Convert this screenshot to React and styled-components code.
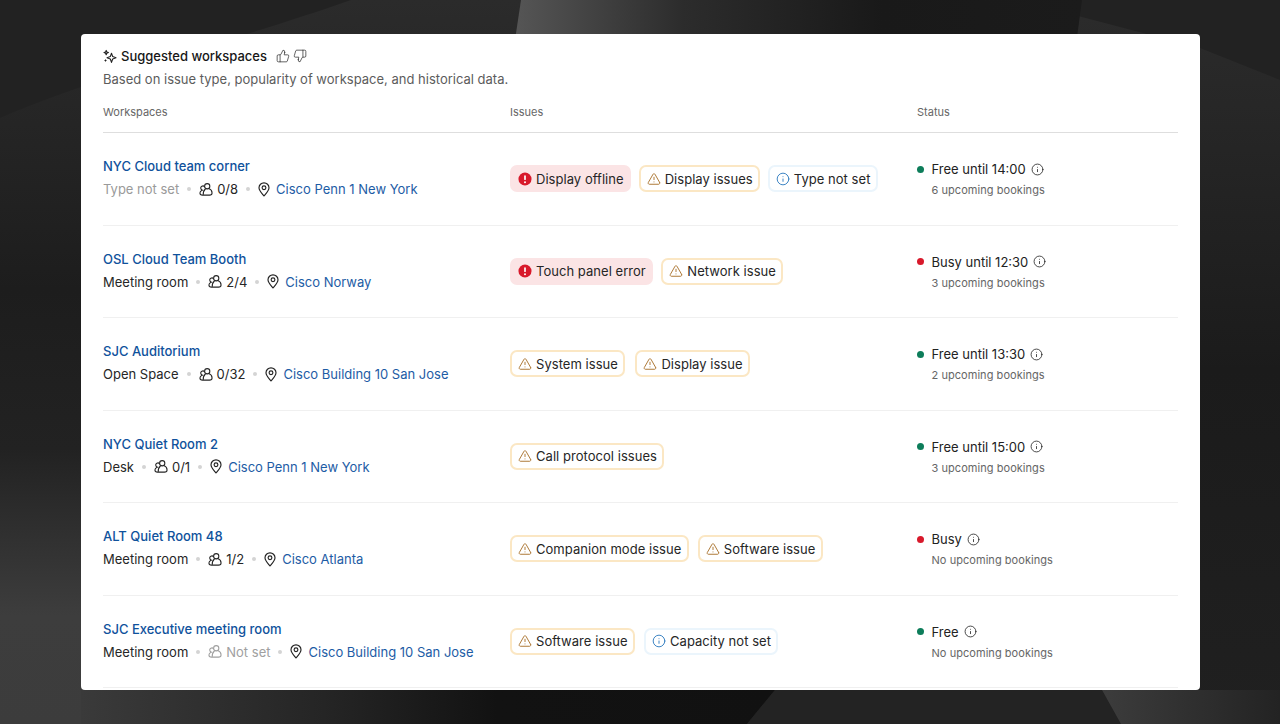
import React from "react";
import styled, { createGlobalStyle } from "styled-components";
import { ThumbsUp, ThumbsDown, TriangleAlert, Info } from "lucide-react";

const Global = createGlobalStyle`
  html, body { margin: 0; padding: 0; background: #1c1c1c; }
  body { font-family: Inter, "Liberation Sans", sans-serif; -webkit-font-smoothing: antialiased; }
  * { box-sizing: border-box; }
`;

const Page = styled.div`
  position: relative;
  width: 1280px;
  height: 724px;
  overflow: hidden;
  padding: 34px 80px 34px 81px;
`;
const Backdrop = styled.svg`
  position: absolute;
  inset: 0;
  width: 1280px;
  height: 724px;
`;
const Card = styled.section`
  position: relative;
  height: 656px;
  background: #fff;
  border-radius: 4px;
  padding: 12px 22px 0;
  overflow: hidden;
`;
const TitleRow = styled.div`
  display: flex;
  align-items: center;
  height: 20px;
  color: #1a1a1a;
`;
const Title = styled.h2`
  margin: 0 9px 0 3px;
  font-size: 13px;
  line-height: 20px;
  font-weight: 500;
  color: #171717;
`;
const ThumbGroup = styled.div`
  display: flex;
  gap: 3px;
  color: #333;
`;
const Subtitle = styled.p`
  margin: 3px 0 0;
  font-size: 13px;
  line-height: 20px;
  color: #5c5c5c;
`;
const Columns = styled.div`
  display: grid;
  grid-template-columns: 407px 407px 1fr;
  margin-top: 15px;
  padding-bottom: 12px;
  border-bottom: 1px solid #dedede;
  font-size: 11px;
  line-height: 16px;
  color: #666;
`;
const Row = styled.div`
  display: grid;
  grid-template-columns: 407px 407px 1fr;
  align-items: center;
  height: 92.5px;
  border-bottom: 1px solid #f0f0f0;
`;
const WorkspaceCell = styled.div`
  display: flex;
  flex-direction: column;
  gap: 3px;
  padding-bottom: 1.6px;
`;
const Name = styled.a`
  font-size: 13px;
  line-height: 20px;
  font-weight: 500;
  color: #0f529c;
`;
const Meta = styled.div`
  display: flex;
  align-items: center;
  gap: 8px;
  font-size: 13px;
  line-height: 20px;
  color: #262626;
`;
const MetaText = styled.span`
  color: ${(p) => (p.$muted ? "#9a9a9a" : "#262626")};
`;
const Dot = styled.i`
  width: 4px;
  height: 4px;
  border-radius: 50%;
  background: #d4d4d4;
  flex: none;
`;
const Capacity = styled.span`
  display: flex;
  align-items: center;
  gap: 4px;
  color: ${(p) => (p.$muted ? "#a0a0a0" : "#262626")};
`;
const Place = styled.span`
  display: flex;
  align-items: center;
  gap: 6px;
  color: #1d5ca5;
`;
const PinWrap = styled.span`
  display: flex;
  color: #222;
`;
const ChipRow = styled.div`
  display: flex;
  align-items: center;
  gap: ${(p) => p.$gap}px;
`;
const tones = {
  error: { bg: "#fbe4e5", border: "#fbe4e5", icon: "#d8192b" },
  warn: { bg: "#fff", border: "#fbe7c4", icon: "#a8702a" },
  info: { bg: "#fff", border: "#ebf5fc", icon: "#2f7cc0" },
};
const Chip = styled.span`
  display: inline-flex;
  align-items: center;
  gap: 4px;
  height: 27px;
  padding: 0 5.5px 0 6px;
  border-radius: 7px;
  border: 2px solid ${(p) => tones[p.$tone].border};
  background: ${(p) => tones[p.$tone].bg};
  font-size: 13px;
  letter-spacing: 0.04px;
  color: #262626;
  white-space: nowrap;
  svg { color: ${(p) => tones[p.$tone].icon}; flex: none; }
`;
const StatusCell = styled.div`
  display: flex;
  flex-direction: column;
  gap: 3px;
`;
const StatusLine = styled.div`
  display: flex;
  align-items: center;
  font-size: 13px;
  line-height: 20px;
  color: #222;
`;
const StatusDot = styled.i`
  width: 7px;
  height: 7px;
  border-radius: 50%;
  margin-right: 7.5px;
  background: ${(p) => (p.$busy ? "#d8192b" : "#0d7d5a")};
`;
const StatusInfo = styled.span`
  display: flex;
  margin-left: 5px;
  color: #222;
`;
const StatusNote = styled.div`
  padding-left: 14.5px;
  font-size: 11px;
  letter-spacing: 0.05px;
  line-height: 16px;
  color: #666;
`;

const Sparkle = () => (
  <svg width="15" height="15" viewBox="0 0 15 15" fill="none" stroke="#222" strokeWidth="1.1" strokeLinejoin="round">
    <path d="M8.5 4.2 9.7 7.6 13 8.8 9.7 10 8.5 13.4 7.3 10 4 8.8 7.3 7.6Z" />
    <path d="M3.2 1.4 3.8 3 5.4 3.6 3.8 4.2 3.2 5.8 2.6 4.2 1 3.6 2.6 3Z" />
    <path d="M2.5 10.5v2M1.5 11.5h2" />
  </svg>
);
const People = () => (
  <svg width="14" height="15" viewBox="0 0 15 15" fill="none" stroke="currentColor" strokeWidth="1.15">
    <circle cx="8.8" cy="4" r="2.8" />
    <path d="M6 4.6A2.3 2.3 0 1 0 4.6 8.2" />
    <path d="M3.2 8.3C1.8 9 1 10 1 11.2 1 12.6 2.2 13.5 3.8 13.5H11.2C12.9 13.5 14 12.6 14 11.2 14 9 12.4 7.3 10.6 6.5" />
    <path d="M4.6 13.2C4.2 10.4 5.3 8.4 7 6.7" />
  </svg>
);
const Pin = () => (
  <svg width="12" height="15" viewBox="0 0 12 15" fill="none" stroke="currentColor" strokeWidth="1.15">
    <path d="M6 14C3.8 11.3 1 8.6 1 5.8A5 5 0 0 1 11 5.8C11 8.6 8.2 11.3 6 14Z" strokeLinejoin="round" />
    <circle cx="6" cy="5.7" r="1.9" />
  </svg>
);
const ErrorIcon = () => (
  <svg width="14" height="14" viewBox="0 0 15 15">
    <circle cx="7.5" cy="7.5" r="7" fill="currentColor" />
    <rect x="6.6" y="3.4" width="1.8" height="5.2" rx=".9" fill="#fff" />
    <circle cx="7.5" cy="10.9" r="1.05" fill="#fff" />
  </svg>
);

const ChipIcon = ({ tone }) => {
  if (tone === "error") return <ErrorIcon />;
  if (tone === "warn") return <TriangleAlert size={14} strokeWidth={1.6} />;
  return <Info size={14} strokeWidth={1.6} />;
};

const rows = [
  { name: "NYC Cloud team corner", type: "Type not set", typeMuted: true, cap: "0/8", place: "Cisco Penn 1 New York", gap: 7.5,
    chips: [["error", "Display offline"], ["warn", "Display issues"], ["info", "Type not set"]], status: "Free until 14:00", note: "6 upcoming bookings" },
  { name: "OSL Cloud Team Booth", type: "Meeting room", cap: "2/4", place: "Cisco Norway", gap: 8,
    chips: [["error", "Touch panel error"], ["warn", "Network issue"]], status: "Busy until 12:30", busy: true, note: "3 upcoming bookings" },
  { name: "SJC Auditorium", type: "Open Space", cap: "0/32", place: "Cisco Building 10 San Jose", gap: 10,
    chips: [["warn", "System issue"], ["warn", "Display issue"]], status: "Free until 13:30", note: "2 upcoming bookings" },
  { name: "NYC Quiet Room 2", type: "Desk", cap: "0/1", place: "Cisco Penn 1 New York", gap: 8,
    chips: [["warn", "Call protocol issues"]], status: "Free until 15:00", note: "3 upcoming bookings" },
  { name: "ALT Quiet Room 48", type: "Meeting room", cap: "1/2", place: "Cisco Atlanta", gap: 9,
    chips: [["warn", "Companion mode issue"], ["warn", "Software issue"]], status: "Busy", busy: true, note: "No upcoming bookings" },
  { name: "SJC Executive meeting room", type: "Meeting room", cap: "Not set", capMuted: true, place: "Cisco Building 10 San Jose", gap: 9,
    chips: [["warn", "Software issue"], ["info", "Capacity not set"]], status: "Free", note: "No upcoming bookings" },
];

const BackgroundArt = () => (
  <Backdrop viewBox="0 0 1280 724" preserveAspectRatio="none" aria-hidden="true">
    <defs>
      <linearGradient id="top" x1="0" x2="1" y1="0" y2="0">
        <stop offset="0" stopColor="#565656" />
        <stop offset=".3" stopColor="#2c2c2c" />
        <stop offset=".65" stopColor="#191919" />
        <stop offset="1" stopColor="#1b1b1b" />
      </linearGradient>
      <linearGradient id="base" x1="0" x2="0" y1="0" y2="1">
        <stop offset="0" stopColor="#2b2b2b" />
        <stop offset=".4" stopColor="#1d1d1d" />
        <stop offset=".62" stopColor="#222" />
        <stop offset=".85" stopColor="#3d3d3d" />
        <stop offset="1" stopColor="#3c3c3c" />
      </linearGradient>
      <linearGradient id="bottom" x1="0" x2="1" y1="0" y2="0">
        <stop offset="0" stopColor="#3a3a3a" />
        <stop offset=".35" stopColor="#252525" />
        <stop offset=".6" stopColor="#121212" />
        <stop offset="1" stopColor="#111" />
      </linearGradient>
      <linearGradient id="rightSide" x1="0" x2="0" y1="0" y2="1">
        <stop offset="0" stopColor="#2b2b2b" />
        <stop offset=".5" stopColor="#1b1b1b" />
        <stop offset="1" stopColor="#202020" />
      </linearGradient>
      <linearGradient id="cornerRight" x1="0" x2="1" y1="0" y2="0">
        <stop offset="0" stopColor="#3c3c3c" />
        <stop offset="1" stopColor="#232323" />
      </linearGradient>
    </defs>
    <rect width="1280" height="724" fill="#222" />
    <path d="M0 118 C90 78 250 36 351 0 H640 V724 H0Z" fill="url(#base)" />
    <path d="M1078 16 L1200 48 L1280 80 V724 H900 V16Z" fill="url(#rightSide)" />
    <path d="M521 0 H1082 L1074 60 H512Z" fill="url(#top)" />
    <path d="M81 690 H775 L747 724 H81Z" fill="url(#bottom)" />
    <path d="M775 690 H1102 L1121 724 H747Z" fill="#232323" />
    <path d="M1102 690 H1280 V724 H1121Z" fill="url(#cornerRight)" />
  </Backdrop>
);

export default function App() {
  return (
    <>
      <Global />
      <Page>
        <BackgroundArt />
        <Card>
          <TitleRow>
            <Sparkle />
            <Title>Suggested workspaces</Title>
            <ThumbGroup>
              <ThumbsUp size={14} strokeWidth={1.3} />
              <ThumbsDown size={14} strokeWidth={1.3} />
            </ThumbGroup>
          </TitleRow>
          <Subtitle>Based on issue type, popularity of workspace, and historical data.</Subtitle>
          <Columns>
            <span>Workspaces</span>
            <span>Issues</span>
            <span>Status</span>
          </Columns>
          {rows.map((r) => (
            <Row key={r.name}>
              <WorkspaceCell>
                <Name>{r.name}</Name>
                <Meta>
                  <MetaText $muted={r.typeMuted}>{r.type}</MetaText>
                  <Dot />
                  <Capacity $muted={r.capMuted}>
                    <People />
                    {r.cap}
                  </Capacity>
                  <Dot />
                  <Place>
                    <PinWrap><Pin /></PinWrap>
                    {r.place}
                  </Place>
                </Meta>
              </WorkspaceCell>
              <ChipRow $gap={r.gap}>
                {r.chips.map(([tone, label]) => (
                  <Chip key={label} $tone={tone}>
                    <ChipIcon tone={tone} />
                    {label}
                  </Chip>
                ))}
              </ChipRow>
              <StatusCell>
                <StatusLine>
                  <StatusDot $busy={r.busy} />
                  {r.status}
                  <StatusInfo><Info size={13} strokeWidth={1.5} /></StatusInfo>
                </StatusLine>
                <StatusNote>{r.note}</StatusNote>
              </StatusCell>
            </Row>
          ))}
        </Card>
      </Page>
    </>
  );
}
